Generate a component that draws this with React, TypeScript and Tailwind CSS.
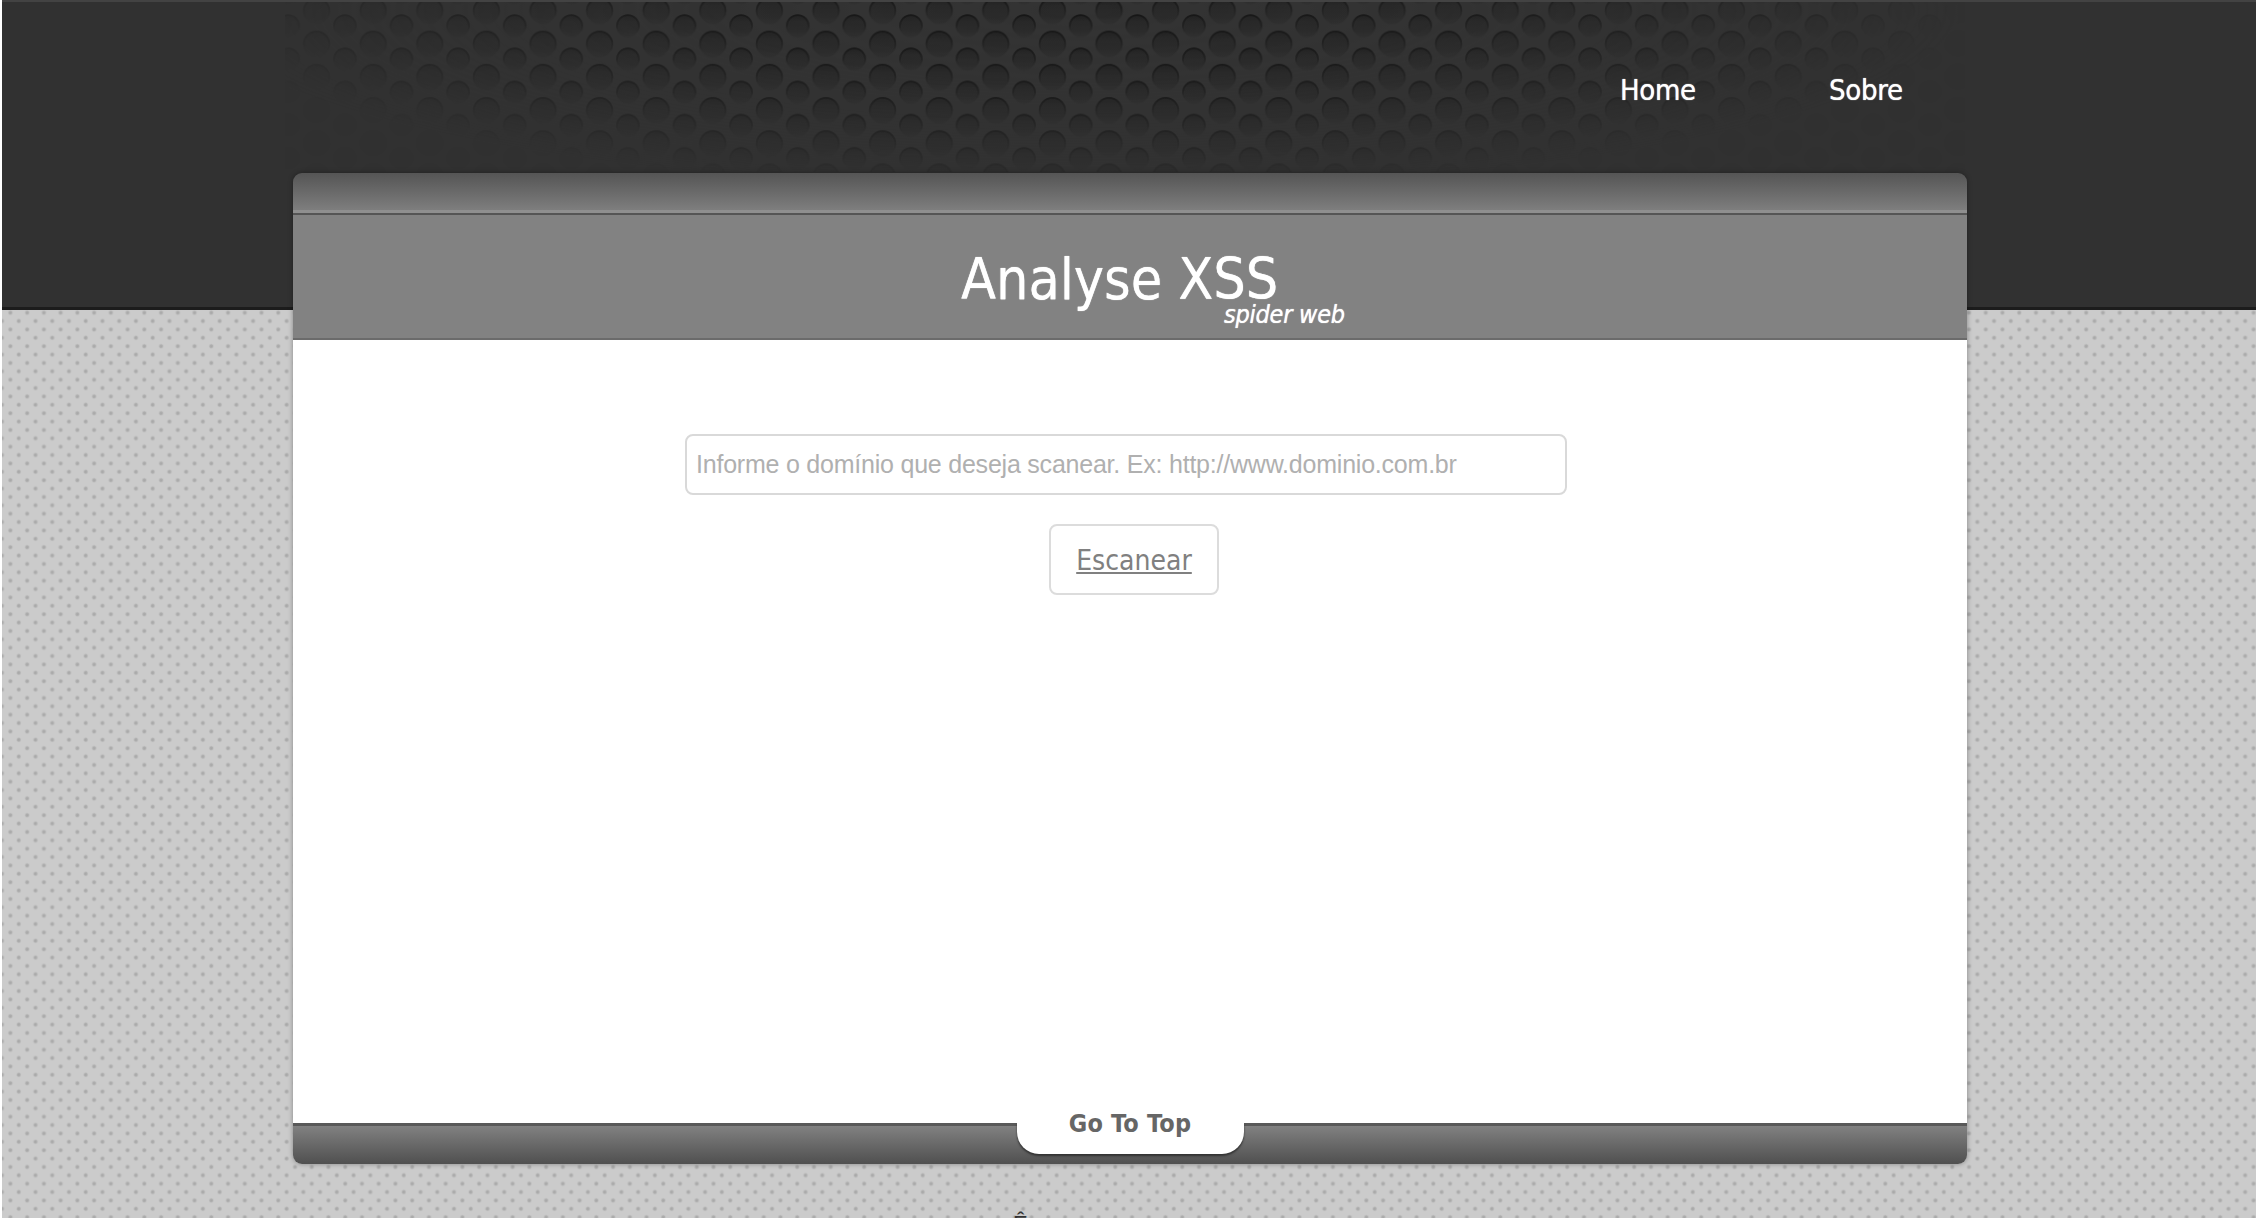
function Honeycomb() {
  return (
    <svg className="absolute top-0 left-[285px] h-[172px] w-[1680px]" viewBox="285 0 1680 172" aria-hidden="true">
      <defs>
        <linearGradient id="hole" x1="0" y1="0" x2="0" y2="1">
          <stop offset="0" stopColor="#212121" />
          <stop offset="0.3" stopColor="#282828" />
          <stop offset="0.75" stopColor="#2b2b2b" />
          <stop offset="1" stopColor="#303030" />
        </linearGradient>
        <linearGradient id="rim" x1="0" y1="0" x2="0" y2="1">
          <stop offset="0" stopColor="#161616" />
          <stop offset="0.5" stopColor="#1e1e1e" stopOpacity="0.8" />
          <stop offset="0.85" stopColor="#2c2c2c" stopOpacity="0.2" />
        </linearGradient>
        <pattern id="mesh" x="684.5" y="-5.5" width="56.6" height="33.2" patternUnits="userSpaceOnUse">
          <rect width="56.6" height="33.2" fill="#333333" />
          <circle cx="28.3" cy="16.6" r="12.8" fill="url(#hole)" stroke="url(#rim)" strokeWidth="1.8" />
          <circle cx="0" cy="31.6" r="11" fill="url(#hole)" stroke="url(#rim)" strokeWidth="1.8" />
          <circle cx="56.6" cy="31.6" r="11" fill="url(#hole)" stroke="url(#rim)" strokeWidth="1.8" />
          <circle cx="0" cy="-1.6" r="11" fill="url(#hole)" stroke="url(#rim)" strokeWidth="1.8" />
          <circle cx="56.6" cy="-1.6" r="11" fill="url(#hole)" stroke="url(#rim)" strokeWidth="1.8" />
        </pattern>
        <radialGradient id="fade" gradientUnits="userSpaceOnUse" cx="0" cy="0" r="1" gradientTransform="translate(1080 10) scale(880 180)">
          <stop offset="0" stopColor="#fff" />
          <stop offset="0.4" stopColor="#ddd" />
          <stop offset="0.65" stopColor="#999" />
          <stop offset="0.85" stopColor="#555" />
          <stop offset="1" stopColor="#080808" />
        </radialGradient>
        <mask id="vignette" maskUnits="userSpaceOnUse" x="285" y="0" width="1680" height="172">
          <rect x="285" width="1680" height="172" fill="url(#fade)" />
        </mask>
      </defs>
      <rect x="285" y="2" width="1680" height="170" fill="url(#mesh)" mask="url(#vignette)" />
    </svg>
  );
}

export default function App() {
  return (
    <div className="relative h-[1218px] w-[2256px] overflow-hidden bg-white pl-[2px] font-['DejaVu_Sans_Condensed','DejaVu_Sans',sans-serif] [font-stretch:condensed]">
      <div className="h-full bg-[#cbcbcb]">
        <svg className="absolute inset-0 h-full w-full" aria-hidden="true">
          <defs>
            <radialGradient id="dot">
              <stop offset="0" stopColor="#a6a6a6" />
              <stop offset="0.45" stopColor="#b0b0b0" />
              <stop offset="1" stopColor="#cbcbcb" stopOpacity="0" />
            </radialGradient>
            <pattern id="dots" x="6.2" y="308.5" width="16.74" height="16.75" patternUnits="userSpaceOnUse">
              <circle cx="4.2" cy="4.2" r="3.2" fill="url(#dot)" />
              <circle cx="12.57" cy="12.57" r="3.2" fill="url(#dot)" />
            </pattern>
          </defs>
          <rect x="2" y="309" width="2254" height="909" fill="url(#dots)" />
        </svg>
        <div className="absolute top-0 right-0 left-[2px] h-[310px] border-t-2 border-b-[3px] border-t-[#434343] border-b-[#1c1c1c] bg-[#313131]" />
        <Honeycomb />

        <div className="relative flex h-full flex-col">
          <nav className="flex h-[173px] shrink-0 justify-end pt-[68px] pr-[350px] text-[29px] leading-[44px] tracking-[-0.3px] text-white [text-shadow:0_0_1px_#fff]">
            <a className="mr-[132px] w-[77px]">Home</a>
            <a className="w-[77px]">Sobre</a>
          </nav>

          <main className="ml-[291px] flex h-[991px] w-[1674px] shrink-0 flex-col rounded-[9px] shadow-[0_0_5px_rgba(0,0,0,0.35)]">
            <div className="h-[40px] shrink-0 rounded-t-[9px] border-b-[3px] border-[#8f8f8f] bg-linear-to-b from-[#555] to-[#7e7e7e]" />
            <header className="relative h-[127px] shrink-0 border-t-2 border-b-2 border-t-[#555] border-b-[#6b6b6b] bg-[#828282] text-white [text-shadow:0_0_1px_#fff]">
              <h1 className="absolute top-[22px] left-[668px] text-[57px] leading-[84px] tracking-[-0.1px] whitespace-nowrap">Analyse XSS</h1>
              <span className="absolute top-[82px] left-[931px] text-[25px] leading-[36px] tracking-[-0.25px] whitespace-nowrap italic">spider web</span>
            </header>
            <section className="flex flex-1 flex-col bg-white pt-[94px]">
              <div className="ml-[392px] flex h-[61px] w-[882px] items-center rounded-[8px] border-2 border-[#d9d9d9] pl-[9px] font-['Liberation_Sans',sans-serif] text-[25px] tracking-[-0.22px] whitespace-nowrap text-[#b0b0b0]">
                Informe o domínio que deseja scanear. Ex: http://www.dominio.com.br
              </div>
              <button className="mt-[29px] ml-[756px] h-[71px] w-[170px] rounded-[8px] border-2 border-[#dcdcdc] pt-[3px] text-[28px] whitespace-nowrap text-[#808080] underline decoration-2 underline-offset-2">
                Escanear
              </button>
            </section>
            <footer className="flex h-[41px] shrink-0 justify-center rounded-b-[9px] border-t-[3px] border-[#595959] bg-linear-to-b from-[#818181] to-[#505050]">
              <a className="-mt-[3px] h-[31px] w-[227px] rounded-b-[22px] bg-white text-center text-[25px] font-bold tracking-[0.2px] text-[#666] shadow-[0_2px_2px_#333] [clip-path:inset(-30px_-4px_-5px_-4px)]">
                <span className="-mt-[17px] block leading-[36px]">Go To Top</span>
              </a>
            </footer>
          </main>
          <div className="pt-[47px] pl-[1011px] font-['Liberation_Sans',sans-serif] text-[22px] leading-[26px] text-[#333]">Ê</div>
        </div>
      </div>
    </div>
  );
}
